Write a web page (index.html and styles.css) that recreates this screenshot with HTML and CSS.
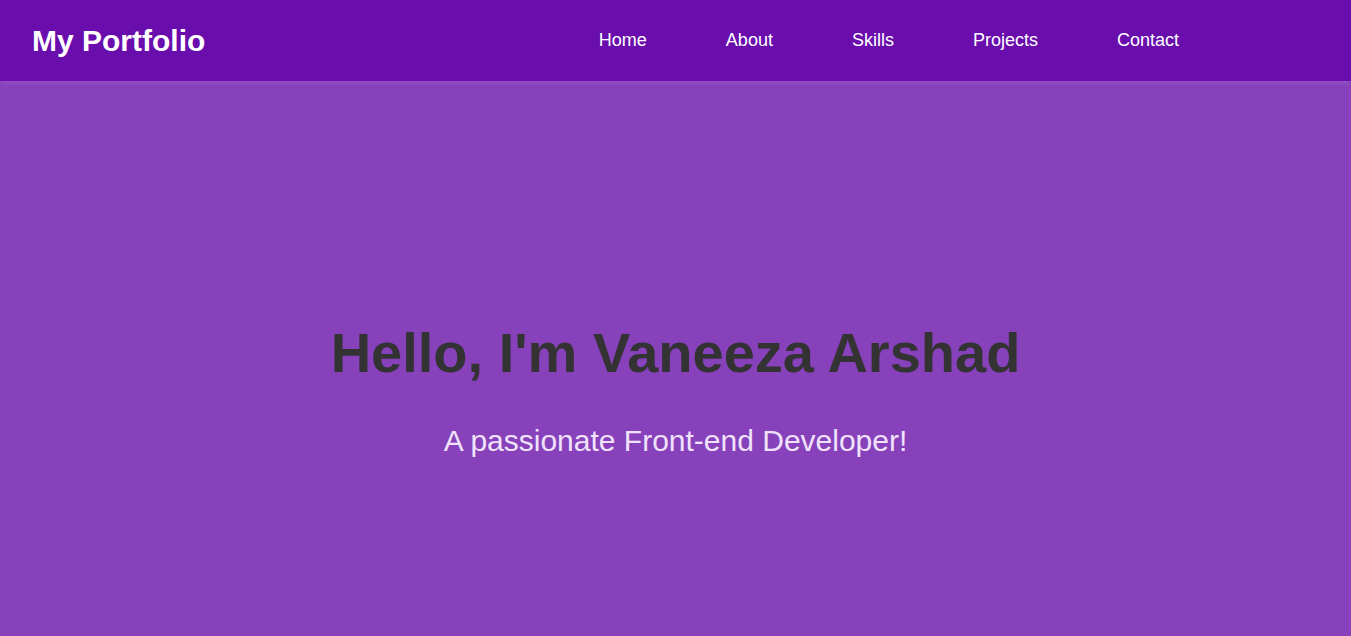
FILE: index.html
```html
<!DOCTYPE html>
<html lang="en">
<head>
<meta charset="utf-8">
<title>My Portfolio</title>
<link rel="stylesheet" href="styles.css">
</head>
<body>
<header class="site-header">
  <div class="logo">My Portfolio</div>
  <nav class="nav">
    <a href="#home">Home</a>
    <a href="#about">About</a>
    <a href="#skills">Skills</a>
    <a href="#projects">Projects</a>
    <a href="#contact">Contact</a>
  </nav>
</header>
<section class="hero" id="home">
  <h1 class="hero-title">Hello, I'm Vaneeza Arshad</h1>
  <p class="hero-sub">A passionate Front-end Developer!</p>
</section>
</body>
</html>
```
FILE: styles.css
```css
* { box-sizing: border-box; }
html, body {
  margin: 0;
  padding: 0;
  height: 100%;
}
body {
  font-family: "Liberation Sans", Arial, sans-serif;
  background: #8741bb;
  overflow: hidden;
}
.site-header {
  position: relative;
  z-index: 1;
  height: 81px;
  background: #6a0dad;
  display: flex;
  align-items: center;
  justify-content: space-between;
  padding: 0 172px 0 32px;
  box-shadow: 0 2px 5px rgba(255, 255, 255, 0.1);
}
.logo {
  color: #ffffff;
  font-size: 30px;
  font-weight: bold;
}
.nav {
  display: flex;
  gap: 79px;
}
.nav a {
  color: #ffffff;
  text-decoration: none;
  font-size: 18px;
}
.hero {
  background: #8741bb;
  min-height: calc(100vh - 81px);
  padding-top: 239px;
  text-align: center;
}
.hero-title {
  margin: 0 0 39px;
  font-size: 56px;
  font-weight: bold;
  color: #333333;
}
.hero-sub {
  margin: 0;
  font-size: 30px;
  color: #f0e2fa;
}
```
